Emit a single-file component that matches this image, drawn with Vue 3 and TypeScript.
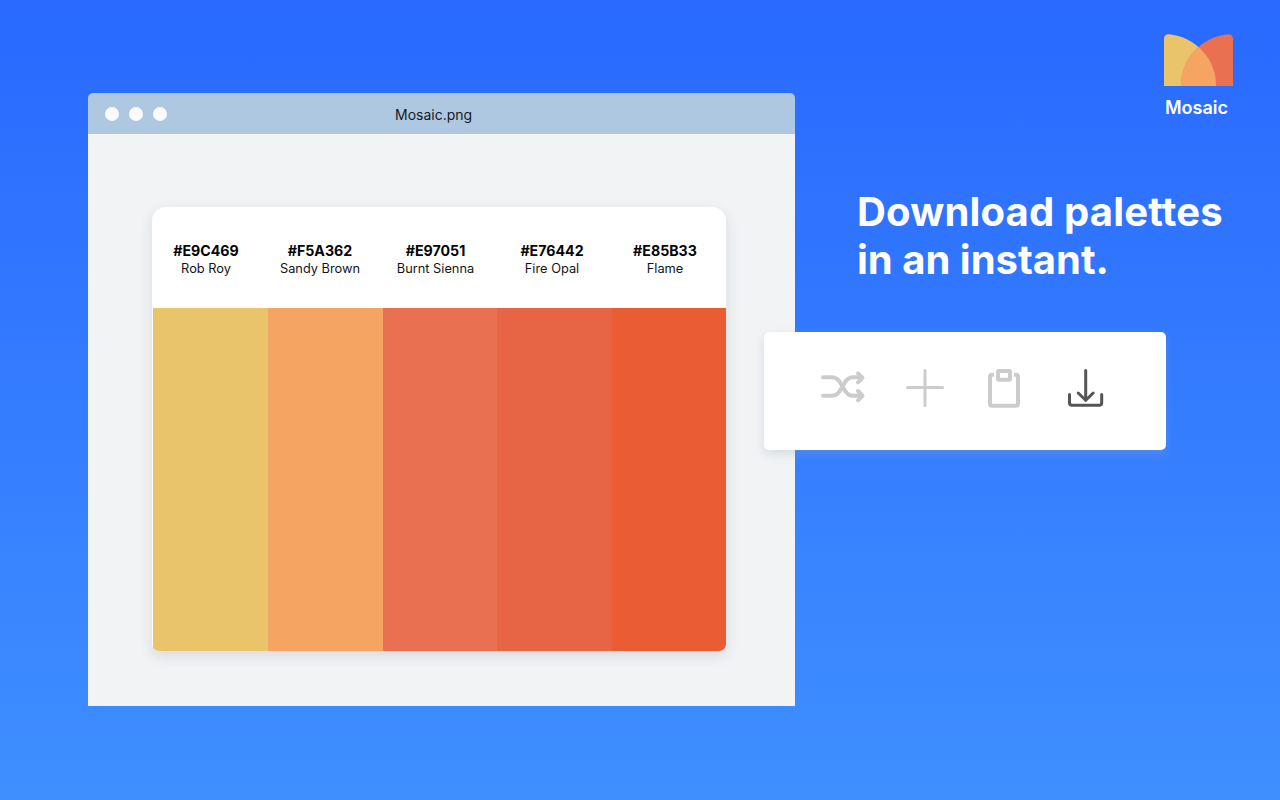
<script setup lang="ts">
interface Swatch { hex: string; name: string; color: string }
const swatches: Swatch[] = [
  { hex: '#E9C469', name: 'Rob Roy', color: '#E9C46A' },
  { hex: '#F5A362', name: 'Sandy Brown', color: '#F5A462' },
  { hex: '#E97051', name: 'Burnt Sienna', color: '#EA7052' },
  { hex: '#E76442', name: 'Fire Opal', color: '#E76544' },
  { hex: '#E85B33', name: 'Flame', color: '#EA5C33' },
]
</script>

<template>
  <div class="page">
    <section class="window">
      <header class="titlebar">
        <div class="dots"><i></i><i></i><i></i></div>
        <span class="title">Mosaic.png</span>
      </header>
      <div class="desk">
        <div class="card">
          <div class="labels">
            <div v-for="s in swatches" :key="s.hex" class="label">
              <strong>{{ s.hex }}</strong>
              <span>{{ s.name }}</span>
            </div>
          </div>
          <div class="bands">
            <div v-for="s in swatches" :key="s.hex" :style="{ background: s.color }"></div>
          </div>
        </div>
      </div>
    </section>

    <aside class="side">
      <div class="brand">
        <svg width="69" height="52" viewBox="0 0 69 52">
          <path d="M0 52V5Q0 0 5 .2A52 52 0 0 1 52 52Z" fill="#E9C46A" />
          <path d="M69 52V5Q69 0 64 .2A52 52 0 0 0 17 52Z" fill="#EA7052" />
          <path d="M17 52A52 52 0 0 1 34.5 13.1A52 52 0 0 1 52 52Z" fill="#F5A462" />
        </svg>
        <span>Mosaic</span>
      </div>
      <h1><span class="line-one">Download palettes</span><br />in an instant.</h1>
      <div class="toolbar">
        <svg class="tool" viewBox="0 0 48 48" fill="none" stroke="#CCCCCC" stroke-width="4" stroke-linecap="round" stroke-linejoin="round">
          <path d="M5 10.3H14C25 10.3 24 28.7 35 28.7H44" />
          <path d="M5 28.7H14C25 28.7 24 10.3 35 10.3H44" />
          <path d="M40 6.3L44.5 10.8L40 15.3" />
          <path d="M40 24L44.5 28.7L40 33.4" />
        </svg>
        <svg class="tool" viewBox="0 0 48 48" fill="none" stroke="#CCCCCC" stroke-width="3" stroke-linecap="round">
          <path d="M26 3.5V38.5" />
          <path d="M8.5 20.5H43.5" />
        </svg>
        <svg class="tool" viewBox="0 0 48 48" fill="none" stroke="#CCCCCC" stroke-width="4" stroke-linejoin="round">
          <path d="M14 7.7H12Q10 7.7 10 9.7V36.7Q10 38.7 12 38.7H36Q38 38.7 38 36.7V9.7Q38 7.7 36 7.7H34" />
          <rect x="18" y="4" width="12" height="8.7" rx="1" />
        </svg>
        <svg class="tool" viewBox="0 0 48 48" fill="none" stroke="#555555" stroke-width="3" stroke-linecap="round" stroke-linejoin="round">
          <path d="M24.7 3.5V33" />
          <path d="M17.2 26L24.7 33.3L32.2 26" />
          <path d="M8.5 27.5V35.8Q8.5 38.3 11 38.3H38.2Q40.7 38.3 40.7 35.8V27.5" />
        </svg>
      </div>
    </aside>
  </div>
</template>

<style>
body { margin: 0; }
</style>

<style scoped>
.page {
  width: 1280px;
  height: 800px;
  box-sizing: border-box;
  overflow: hidden;
  display: flex;
  align-items: flex-start;
  padding: 34px 0 0 88px;
  background: linear-gradient(180deg, #2969FF 0%, #3F8FFF 100%);
  font-family: Inter, "Liberation Sans", sans-serif;
}
.window {
  width: 707px;
  margin-top: 59px;
  flex: none;
  border-radius: 5px 5px 0 0;
  overflow: hidden;
}
.titlebar {
  height: 41px;
  display: flex;
  align-items: center;
  padding-left: 17px;
  background: #AEC8E2;
}
.dots { display: flex; gap: 10px; }
.dots i {
  width: 14px;
  height: 14px;
  border-radius: 50%;
  background: #F9FAFB;
}
.title {
  margin: 2px 0 0 228px;
  font-size: 14px;
  color: #16181C;
}
.desk {
  height: 572px;
  box-sizing: border-box;
  padding: 73px 69px 0 64px;
  background: #F1F3F5;
}
.card {
  height: 444px;
  display: flex;
  flex-direction: column;
  border-radius: 14px 14px 7px 7px;
  background: #FFFFFF;
  overflow: hidden;
  padding-left: 1px;
  box-sizing: border-box;
  box-shadow: 0 5px 14px rgba(40, 50, 70, 0.12);
}
.labels {
  height: 101px;
  flex: none;
  display: grid;
  grid-template-columns: 114px 114px 117px 116px 110px;
  align-content: center;
  margin-left: -4px;
  padding-top: 4px;
  box-sizing: border-box;
}
.label {
  display: flex;
  flex-direction: column;
  align-items: center;
  white-space: nowrap;
}
.label strong { font-size: 14.2px; font-weight: 700; line-height: 18px; color: #050506; }
.label span { font-size: 12.8px; line-height: 18px; color: #131417; }
.bands {
  flex: 1;
  display: grid;
  grid-template-columns: 115px 115px 114px 115px 114px;
}
.side {
  display: flex;
  flex-direction: column;
  align-items: flex-start;
  margin-left: 62px;
  width: 376px;
}
.brand {
  align-self: flex-end;
  display: flex;
  flex-direction: column;
  align-items: center;
  gap: 11px;
  width: 69px;
  color: #FFFFFF;
  font-size: 18px;
  font-weight: 600;
  line-height: 22px;
}
.brand span { margin-right: 4px; }
h1 {
  margin: 69px 0 0;
  color: #FFFFFF;
  font-size: 40px;
  font-weight: 700;
  line-height: 48px;
  white-space: nowrap;
}
.line-one { letter-spacing: 0.18px; }
.toolbar {
  width: 402px;
  height: 118px;
  flex: none;
  margin: 48px 0 0 -93px;
  box-sizing: border-box;
  padding-left: 54px;
  display: flex;
  align-items: center;
  gap: 33px;
  background: #FFFFFF;
  border-radius: 5px;
  box-shadow: 0 4px 10px rgba(160, 170, 190, 0.3);
  position: relative;
}
.tool { width: 48px; height: 48px; flex: none; }
</style>
